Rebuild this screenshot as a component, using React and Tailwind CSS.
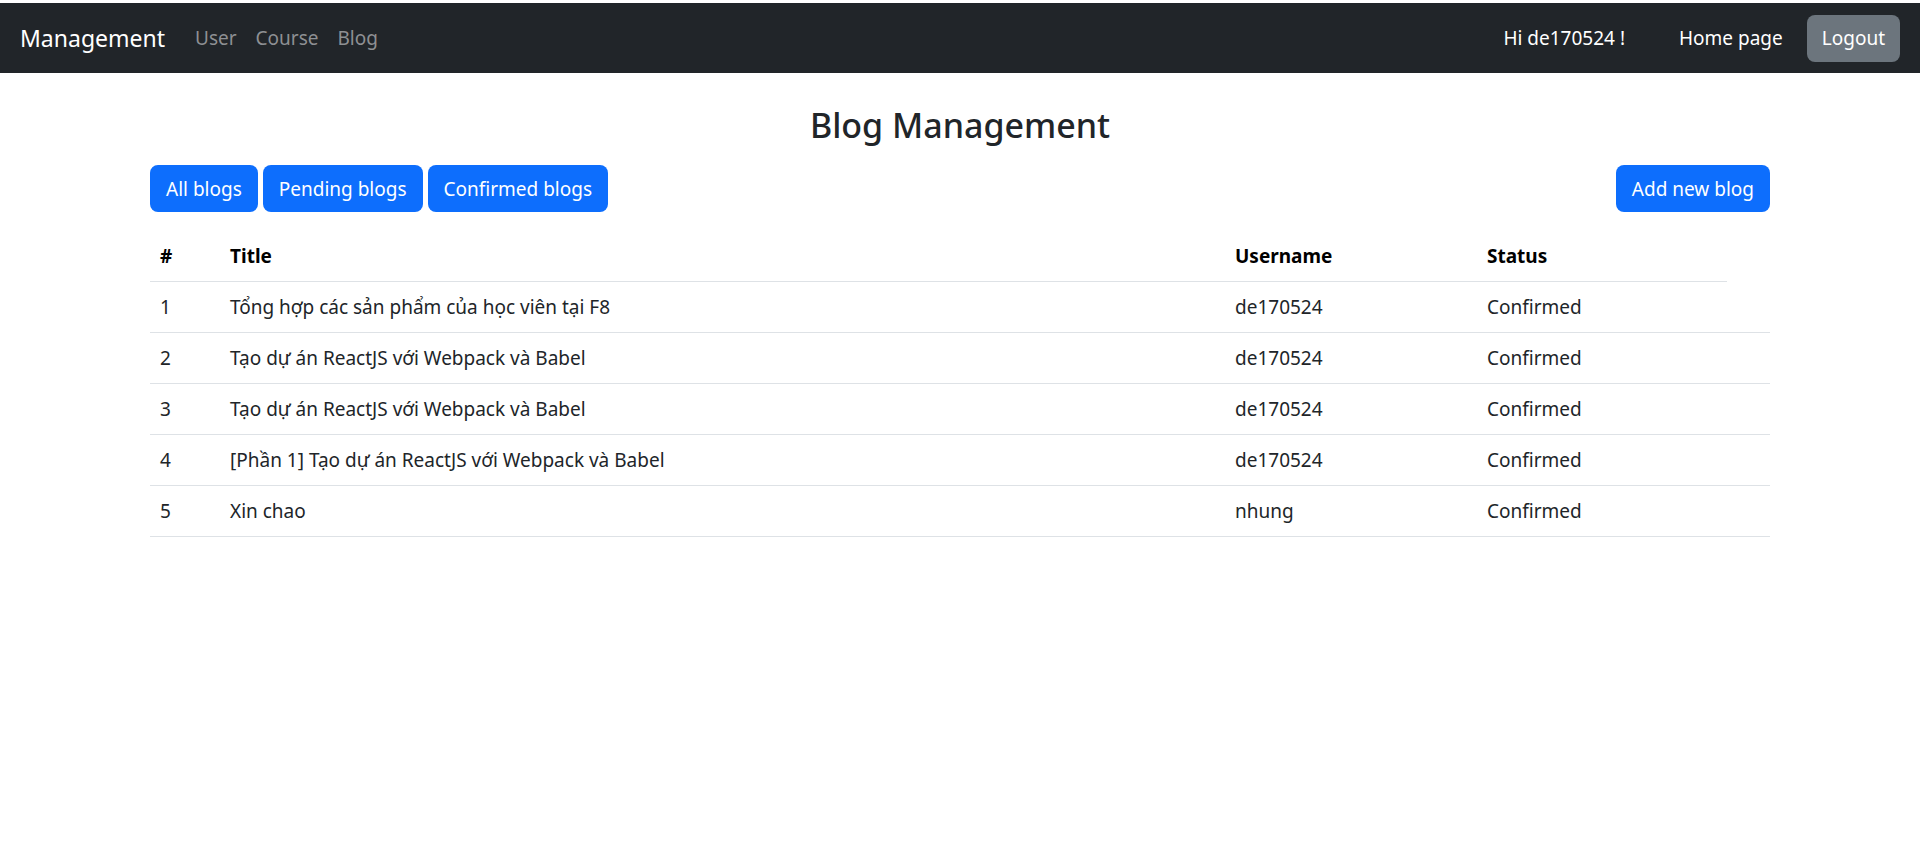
const blogs = [
  { id: 1, title: 'Tổng hợp các sản phẩm của học viên tại F8', username: 'de170524', status: 'Confirmed' },
  { id: 2, title: 'Tạo dự án ReactJS với Webpack và Babel', username: 'de170524', status: 'Confirmed' },
  { id: 3, title: 'Tạo dự án ReactJS với Webpack và Babel', username: 'de170524', status: 'Confirmed' },
  { id: 4, title: '[Phần 1] Tạo dự án ReactJS với Webpack và Babel', username: 'de170524', status: 'Confirmed' },
  { id: 5, title: 'Xin chao', username: 'nhung', status: 'Confirmed' },
]

const Btn = ({ children }) => (
  <button className="h-[47px] px-[16px] rounded-[8px] bg-[#0d6efd] text-white text-[19px] leading-[30px]">
    {children}
  </button>
)

export default function App() {
  return (
    <div className="min-h-[865px] bg-white pt-[3px] text-[#212529]" style={{ fontFamily: '"Noto Sans", "Liberation Sans", sans-serif' }}>
      {/* Navbar */}
      <nav className="h-[70px] bg-[#212529] flex items-center pl-[20px] pr-[20px]">
        <span className="text-white text-[23px] leading-none">Management</span>
        <div className="flex items-center gap-[19px] ml-[30px] text-[19px] text-[#8e9093]">
          <span>User</span>
          <span>Course</span>
          <span>Blog</span>
        </div>
        <div className="ml-auto flex items-center text-[19px] text-white">
          <span>Hi de170524 !</span>
          <span className="ml-[54px]">Home page</span>
          <button className="ml-[24px] h-[47px] px-[15px] rounded-[8px] bg-[#6c757d] text-white text-[19px]">Logout</button>
        </div>
      </nav>

      <main className="w-[1620px] mx-auto">
        <h2 className="text-center text-[34px] font-medium leading-[48px] mt-[28px] mb-[16px]">Blog Management</h2>

        <div className="flex items-center">
          <div className="flex gap-[5px]">
            <Btn>All blogs</Btn>
            <Btn>Pending blogs</Btn>
            <Btn>Confirmed blogs</Btn>
          </div>
          <div className="ml-auto">
            <Btn>Add new blog</Btn>
          </div>
        </div>

        <table className="mt-[19px] w-full table-fixed text-[19px] leading-[30px] border-collapse">
          <colgroup>
            <col className="w-[70px]" />
            <col className="w-[1005px]" />
            <col className="w-[252px]" />
            <col className="w-[250px]" />
            <col className="w-[43px]" />
          </colgroup>
          <thead>
            <tr className="text-black font-bold">
              <th className="text-left px-[10px] py-[10px] border-b border-[#dee2e6]">#</th>
              <th className="text-left px-[10px] py-[10px] border-b border-[#dee2e6]">Title</th>
              <th className="text-left px-[10px] py-[10px] border-b border-[#dee2e6]">Username</th>
              <th className="text-left px-[10px] py-[10px] border-b border-[#dee2e6]">Status</th>
              <th></th>
            </tr>
          </thead>
          <tbody>
            {blogs.map((b) => (
              <tr key={b.id} className="border-b border-[#dee2e6]">
                <td className="px-[10px] py-[10px]">{b.id}</td>
                <td className="px-[10px] py-[10px]">{b.title}</td>
                <td className="px-[10px] py-[10px]">{b.username}</td>
                <td className="px-[10px] py-[10px]">{b.status}</td>
                <td></td>
              </tr>
            ))}
          </tbody>
        </table>
      </main>
    </div>
  )
}
